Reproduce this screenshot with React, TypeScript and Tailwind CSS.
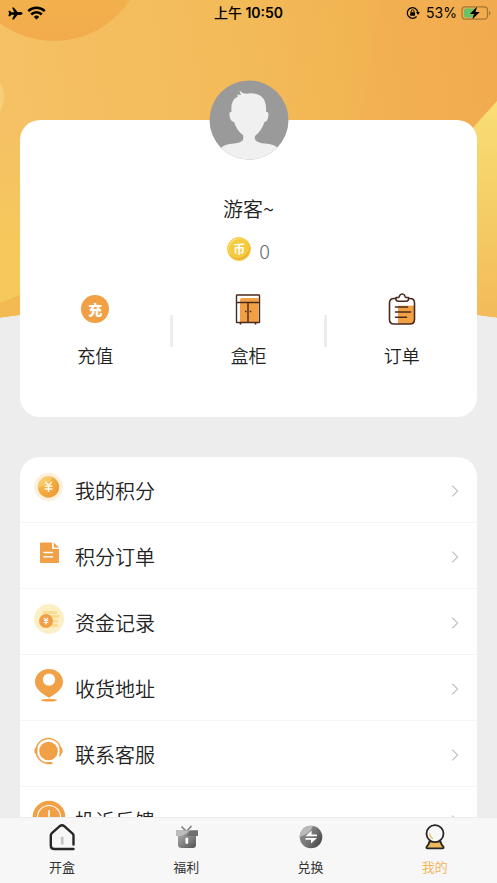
import type { ReactNode } from "react";
import { IoAirplane } from "react-icons/io5";

const ORANGE = "#f2a046";

function Backdrop() {
  return (
    <svg
      className="absolute inset-x-0 top-0 h-80 w-full"
      viewBox="0 0 497 320"
      preserveAspectRatio="none"
      aria-hidden="true"
    >
      <defs>
        <linearGradient id="base" x1="0" y1="0.1" x2="1" y2="0">
          <stop offset="0" stopColor="#f5c164" />
          <stop offset="0.5" stopColor="#f3ba58" />
          <stop offset="0.75" stopColor="#f2b052" />
          <stop offset="1" stopColor="#f1ab4e" />
        </linearGradient>
        <linearGradient id="leftFade" x1="0" y1="0" x2="0" y2="1">
          <stop offset="0" stopColor="#f5c95b" stopOpacity="0" />
          <stop offset="1" stopColor="#f5c95b" />
        </linearGradient>
        <linearGradient id="topBall" x1="0" y1="0" x2="0" y2="1">
          <stop offset="0.5" stopColor="#f3b84f" />
          <stop offset="1" stopColor="#f2ab4c" />
        </linearGradient>
        <linearGradient id="rightBall" x1="0" y1="0" x2="0" y2="1">
          <stop offset="0" stopColor="#f9de76" />
          <stop offset="0.5" stopColor="#f5cd65" />
          <stop offset="1" stopColor="#f3ba59" />
        </linearGradient>
        <clipPath id="curve">
          <path d="M0 0H497V317.500Q248 282 0 317.500Z" />
        </clipPath>
      </defs>
      <g clipPath="url(#curve)">
        <rect width="497" height="320" fill="url(#base)" />
        <rect y="130" width="160" height="120" fill="url(#leftFade)" />
        <rect y="250" width="160" height="70" fill="#f5c95b" />
        <path d="M0 303L22 294V320H0Z" fill="#f3b952" />
        <path d="M325 0L380 0L360 120L290 120Z" fill="#f4bd50" opacity="0.2" />
        <circle cx="54" cy="-50" r="91" fill="url(#topBall)" />
        <circle cx="-26" cy="97" r="30" fill="#f6d077" />
        <path d="M497 101L470 131V320H497Z" fill="url(#rightBall)" />
      </g>
    </svg>
  );
}

function WifiIcon() {
  return (
    <svg className="h-[14px] w-[19px]" viewBox="0 0 19 14" fill="none" stroke="#000" strokeWidth="2.600">
      <path d="M1.300 5.200A11.600 11.600 0 0 1 17.700 5.200" />
      <path d="M4.200 8.500A7.500 7.500 0 0 1 14.800 8.500" />
      <path d="M6.800 10.900A3.900 3.900 0 0 1 12.200 10.900L9.500 13.600Z" fill="#000" stroke="none" />
    </svg>
  );
}

function RotationLockIcon() {
  return (
    <svg className="size-[14px]" viewBox="0 0 14 14" fill="none" stroke="#000">
      <path d="M11.800 6A5.300 5.300 0 1 0 10.600 10.500" strokeWidth="1.300" />
      <path d="M10 6H14L12 9Z" fill="#000" stroke="none" />
      <rect x="4.200" y="6.200" width="4.800" height="3.600" rx="0.600" fill="#000" stroke="none" />
      <path d="M5.200 6.500V5.300A1.400 1.400 0 0 1 8 5.300V6.500" strokeWidth="1" />
    </svg>
  );
}

function BatteryIcon() {
  return (
    <svg className="h-[14px] w-[30px]" viewBox="0 0 30 14">
      <rect x="1" y="0.800" width="25.500" height="12.400" rx="3.500" fill="none" stroke="#a27736" strokeWidth="1.200" />
      <path d="M5 2.500H13V11.500H5A2 2 0 0 1 3 9.500V4.500A2 2 0 0 1 5 2.500Z" fill="#62c466" />
      <path d="M28 5V9.400Q29.400 8.800 29.400 7.200T28 5Z" fill="#a27736" />
      <path
        d="M16.200 0.500L8.800 8H13L11.200 13.500L18.800 6H14.500Z"
        fill="#000"
        stroke="#f1ae50"
        strokeWidth="0.800"
        paintOrder="stroke"
      />
    </svg>
  );
}

function StatusBar() {
  return (
    <div className="grid h-[26px] grid-cols-3 items-center font-['Inter','Noto_Sans_CJK_SC',sans-serif] text-sm text-black">
      <div className="flex items-center gap-1 pl-2">
        <IoAirplane className="size-[15px]" />
        <WifiIcon />
      </div>
      <div className="text-center font-semibold">
        <span className="font-medium">上午</span> 10:50
      </div>
      <div className="flex items-center justify-end gap-1 pr-1.5">
        <RotationLockIcon />
        <span className="pl-0.5">53%</span>
        <BatteryIcon />
      </div>
    </div>
  );
}

function Avatar() {
  return (
    <svg className="-mt-10 size-20" viewBox="0 0 80 80" role="img" aria-label="头像">
      <defs>
        <clipPath id="avatarClip">
          <circle cx="40" cy="40" r="39.500" />
        </clipPath>
      </defs>
      <g clipPath="url(#avatarClip)">
        <rect width="80" height="80" fill="#9a9a9a" />
        <path
          d="M12 68C17 62 28 65 33 61Q35 59 34 55Q28 51 25 42C22 42 20 37 20.500 33Q21 31.500 22.500 32C22 25 23 19 29 16.500L28 14.500L32 15L30.500 10.500Q33 13.500 37 13.800C46 12 54 15 56 22Q57.500 27 57 32Q59.500 31.500 59.500 34C59.500 38 58 42 55.500 42Q52.500 51 46 56Q45 60 48 61.500C54 65 63 62 69 68V80H12Z"
          fill="#f0f0f0"
        />
      </g>
    </svg>
  );
}

function CoinBadge() {
  return (
    <span className="flex size-6 items-center justify-center rounded-full border border-[#f7cf4a] bg-[#f5cb3e] text-xs font-bold text-white shadow-[inset_-1px_-2px_0_#eeb03c,inset_1px_1px_0_#fae07a]">
      币
    </span>
  );
}

function RechargeIcon() {
  return (
    <span className="flex size-7 items-center justify-center rounded-full bg-[#f2a046] text-sm leading-none font-black text-white">
      充
    </span>
  );
}

function CabinetIcon() {
  return (
    <svg className="size-8" viewBox="0 0 32 32" fill="none" stroke="#4a2a1c" strokeWidth="1.400">
      <path d="M8 7Q8 5 10 5H26.500V29H8Z" fill={ORANGE} stroke="none" />
      <rect x="4.500" y="2" width="23" height="27.500" rx="0.500" />
      <path d="M4.500 9.500H27.500M16 9.500V29.500" />
      <path d="M8.500 29.500V31.500M23.500 29.500V31.500" strokeWidth="1.600" />
      <path d="M13 18.500H14.500M17.800 18.500H19.300" strokeWidth="1.500" />
    </svg>
  );
}

function ClipboardIcon() {
  return (
    <svg className="size-8" viewBox="0 0 32 32" fill="none" stroke="#4a2a1c" strokeWidth="1.600" strokeLinecap="round" strokeLinejoin="round">
      <path d="M12 12.700H28V31H12Z" fill={ORANGE} stroke="none" />
      <path d="M10 5.500H8Q3.500 5.500 3.500 10V26.500Q3.500 31 8 31H24Q28.500 31 28.500 26.500V10Q28.500 5.500 24 5.500H22.500" />
      <path
        d="M10 4.500H12.500Q13.300 4.300 13.500 3Q14 1 16.200 1T18.900 3Q19.100 4.300 20 4.500H22.500Q23.200 8.200 20 8.200H12.500Q9.300 8.200 10 4.500Z"
        fill="#fff"
      />
      <path d="M9.500 14H21.500M9.500 19H24.500M9.500 24.300H20.500" />
    </svg>
  );
}

function PointsIcon() {
  return (
    <svg className="size-[34px]" viewBox="0 0 34 34">
      <defs>
        <linearGradient id="points" x1="0" y1="0" x2="1" y2="1">
          <stop offset="0" stopColor="#f8ca68" />
          <stop offset="0.500" stopColor="#f0ab40" />
          <stop offset="1" stopColor="#ee9430" />
        </linearGradient>
      </defs>
      <circle cx="16.500" cy="17" r="14.300" fill="#fdf0dc" />
      <circle cx="16.500" cy="17" r="10.700" fill="url(#points)" />
      <path d="M6 17A10.500 10.500 0 0 1 20 7Q19 15 6 17Z" fill="#fbd884" opacity="0.500" />
      <path d="M13.300 11.800L16.500 15.800L19.700 11.800M12.500 16.200H20.500M12.500 19H20.500M16.500 15.800V22" fill="none" stroke="#fff6e4" strokeWidth="1.600" />
    </svg>
  );
}

function PointsOrderIcon() {
  return (
    <svg className="size-[34px]" viewBox="0 0 34 34">
      <path d="M9 6.500H20V11.500Q20 13 21.500 13H27V26Q27 27 26 27H9Q8 27 8 26V7.500Q8 6.500 9 6.500Z" fill={ORANGE} />
      <path d="M21.800 6.500L27 11.500H21.800Z" fill={ORANGE} />
      <path d="M12 16.500H20.500M12 20.800H20.500" stroke="#fff" strokeWidth="1.400" strokeLinecap="round" />
    </svg>
  );
}

function FundsIcon() {
  return (
    <svg className="size-[34px]" viewBox="0 0 34 34" fill="none">
      <circle cx="17" cy="17" r="15" fill="#fcefc6" />
      <path d="M11 10.500H25M15 14.500H27.500M18 19H26M13 23.500H26" stroke="#f9dc90" strokeWidth="3" />
      <circle cx="14" cy="19" r="7" fill={ORANGE} />
      <path d="M12 15.800L14 18.300L16 15.800M11.700 18.500H16.300M11.700 20.500H16.300M14 18.300V22.500" stroke="#fff" strokeWidth="1.100" />
    </svg>
  );
}

function AddressIcon() {
  return (
    <svg className="size-[34px]" viewBox="0 0 34 34">
      <path
        d="M17 1C25 1 31 6.800 31 14C31 20.500 25 25 17 29.800C9 25 3 20.500 3 14C3 6.800 9 1 17 1ZM17 5.400A6.200 6.200 0 1 0 17 17.800A6.200 6.200 0 1 0 17 5.400Z"
        fill={ORANGE}
        fillRule="evenodd"
      />
      <ellipse cx="17" cy="32.200" rx="8" ry="1.400" fill={ORANGE} />
    </svg>
  );
}

function ServiceIcon() {
  return (
    <svg className="size-[34px]" viewBox="0 0 34 34" fill="none" stroke={ORANGE}>
      <circle cx="16.500" cy="17" r="9.300" fill={ORANGE} stroke="none" />
      <path d="M27.600 22.500A12.400 12.400 0 1 0 16.500 29.400" strokeWidth="1.400" />
      <path d="M15.500 29.200H19.500" strokeWidth="2.200" strokeLinecap="round" />
      <path d="M5.500 12.500V21Q2.500 20 2.300 16.800Q2.500 13.500 5.500 12.500ZM27.500 12.500V21Q30.500 20 30.700 16.800Q30.500 13.500 27.500 12.500Z" fill={ORANGE} stroke="none" />
    </svg>
  );
}

function FeedbackIcon() {
  return (
    <svg className="size-[34px]" viewBox="0 0 34 34" fill="none">
      <circle cx="17" cy="17" r="16.300" fill={ORANGE} />
      <circle cx="17" cy="17" r="11.500" stroke="#fff" strokeWidth="1.100" />
      <path d="M17 10V19" stroke="#fff" strokeWidth="1.600" />
      <circle cx="17" cy="22.500" r="1.200" fill="#fff" />
    </svg>
  );
}

function HouseIcon() {
  return (
    <svg className="size-7" viewBox="0 0 28 28" fill="none" strokeLinecap="round" strokeLinejoin="round">
      <path d="M25.500 21.500V12.500Q25.500 11.500 24.600 10.700L16.300 3.200Q14 1.400 11.700 3.200L3.900 10.200Q2.800 11.200 2.800 12.500V22.500Q2.800 26 6.300 26H25.500" stroke="#262626" strokeWidth="2.400" />
      <path d="M14.200 13.800V21.500" stroke="#c2c2c2" strokeWidth="2.600" strokeLinecap="butt" />
    </svg>
  );
}

function GiftIcon() {
  return (
    <svg className="size-7" viewBox="0 0 28 28">
      <defs>
        <linearGradient id="gift" x1="0" y1="0" x2="1" y2="1">
          <stop offset="0" stopColor="#a8a8a8" />
          <stop offset="0.500" stopColor="#808080" />
          <stop offset="1" stopColor="#505050" />
        </linearGradient>
      </defs>
      <path d="M10 4L14.500 8.500L19 3.500" fill="none" stroke="#808080" strokeWidth="1.700" strokeLinecap="round" />
      <path d="M6 12H24V21.500Q24 25 20.500 25H9.500Q6 25 6 21.500Z" fill="url(#gift)" />
      <path d="M4 7.500H26V12Q26 13 25 13H5Q4 13 4 12Z" fill="#8b8b8b" />
      <path d="M4 7.500H17Q14 12 9 13H5Q4 13 4 12Z" fill="#bcbcbc" />
      <path d="M18 7.500H26V12Q26 13 25 13H15Z" fill="#6f6f6f" />
      <rect x="13.500" y="14.800" width="2.700" height="6" rx="0.900" fill="#fff" />
    </svg>
  );
}

function ExchangeIcon() {
  return (
    <svg className="size-7" viewBox="0 0 28 28">
      <defs>
        <linearGradient id="exchange" x1="0" y1="0.200" x2="1" y2="0.800">
          <stop offset="0" stopColor="#8e8e8e" />
          <stop offset="0.500" stopColor="#767676" />
          <stop offset="1" stopColor="#444" />
        </linearGradient>
      </defs>
      <circle cx="14" cy="14" r="11.300" fill="url(#exchange)" />
      <path d="M2.700 14A11.300 11.300 0 0 1 16 2.900Q13 11 2.700 14Z" fill="#b9b9b9" />
      <path d="M8.500 13.200L14.600 7.500V11.400H20V13.200ZM20 14.900L14 20.600V16.700H8.500V14.900Z" fill="#fff" />
    </svg>
  );
}

function ProfileIcon() {
  return (
    <svg className="size-7" viewBox="0 0 28 28" stroke="#262626" strokeWidth="1.800" strokeLinejoin="round">
      <path d="M8.500 18.500H19.500Q20 21.500 22.500 23.800Q23 25.300 21.500 25.300H6.500Q5 25.300 5.500 23.800Q8 21.500 8.500 18.500Z" fill="#f0b95c" />
      <circle cx="14" cy="10.700" r="8.500" fill="#f8f8f8" />
      <path d="M8.700 10.500Q9 14 11.500 15.600" fill="none" stroke="#f0b95c" strokeWidth="1.200" strokeLinecap="round" />
    </svg>
  );
}

type Entry = { label: string; icon: ReactNode; active?: boolean };

const actions: Entry[] = [
  { label: "充值", icon: <RechargeIcon /> },
  { label: "盒柜", icon: <CabinetIcon /> },
  { label: "订单", icon: <ClipboardIcon /> },
];

const menu: Entry[] = [
  { label: "我的积分", icon: <PointsIcon /> },
  { label: "积分订单", icon: <PointsOrderIcon /> },
  { label: "资金记录", icon: <FundsIcon /> },
  { label: "收货地址", icon: <AddressIcon /> },
  { label: "联系客服", icon: <ServiceIcon /> },
  { label: "投诉反馈", icon: <FeedbackIcon /> },
];

const tabs: Entry[] = [
  { label: "开盒", icon: <HouseIcon /> },
  { label: "福利", icon: <GiftIcon /> },
  { label: "兑换", icon: <ExchangeIcon /> },
  { label: "我的", icon: <ProfileIcon />, active: true },
];

function ProfileCard() {
  return (
    <section className="mx-5 mt-[94px] flex flex-col items-center rounded-[20px] bg-white pb-12">
      <Avatar />
      <h1 className="mt-[35px] text-xl leading-7 font-[350] text-[#222]">游客~</h1>
      <div className="mt-3 flex h-7 items-center gap-2">
        <CoinBadge />
        <span className="pt-1 text-xl font-light text-[#666]">0</span>
      </div>
      <div className="mt-[30px] flex w-full items-center">
        {actions.map((item, i) => (
          <div key={item.label} className="contents">
            {i > 0 && <span className="h-8 w-[3px] bg-[#ededed]" />}
            <button type="button" className="flex flex-1 flex-col items-center gap-4">
              <span className="flex size-8 items-center justify-center">{item.icon}</span>
              <span className="text-lg leading-7 font-[350] text-[#222]">{item.label}</span>
            </button>
          </div>
        ))}
      </div>
    </section>
  );
}

function MenuList() {
  return (
    <ul className="mx-5 mt-10 overflow-hidden rounded-[20px] bg-white">
      {menu.map((item) => (
        <li key={item.label} className="border-b border-[#f5f5f5]">
          <a href="#" className="flex h-[65px] items-center gap-[9px] pt-0.5 pr-[18px] pl-3">
            <span className="mb-2">{item.icon}</span>
            <span className="flex-1 text-xl leading-7 font-[350] text-[#222]">{item.label}</span>
            <svg className="h-3 w-2" viewBox="0 0 8 12" fill="none" stroke="#bdbdbd" strokeWidth="1.100" aria-hidden="true">
              <path d="M1.200 0.700L6.700 6L1.200 11.300" />
            </svg>
          </a>
        </li>
      ))}
    </ul>
  );
}

function TabBar() {
  return (
    <nav className="relative grid grid-cols-4 border-t border-[#ebebeb] bg-[#f7f7f7] pt-[5px] pb-1.5">
      {tabs.map((tab) => (
        <a
          key={tab.label}
          href="#"
          aria-current={tab.active ? "page" : undefined}
          className={`flex flex-col items-center gap-1.5 text-[13px] leading-5 ${tab.active ? "text-[#f0b95c]" : "text-[#333]"}`}
        >
          {tab.icon}
          {tab.label}
        </a>
      ))}
    </nav>
  );
}

export default function App() {
  return (
    <div className="flex h-screen flex-col bg-[#ededed] font-['Noto_Sans_CJK_SC',sans-serif]">
      <main className="relative min-h-0 flex-1 overflow-y-auto [scrollbar-width:none]">
        <Backdrop />
        <div className="relative">
          <StatusBar />
          <ProfileCard />
          <MenuList />
        </div>
      </main>
      <TabBar />
    </div>
  );
}
